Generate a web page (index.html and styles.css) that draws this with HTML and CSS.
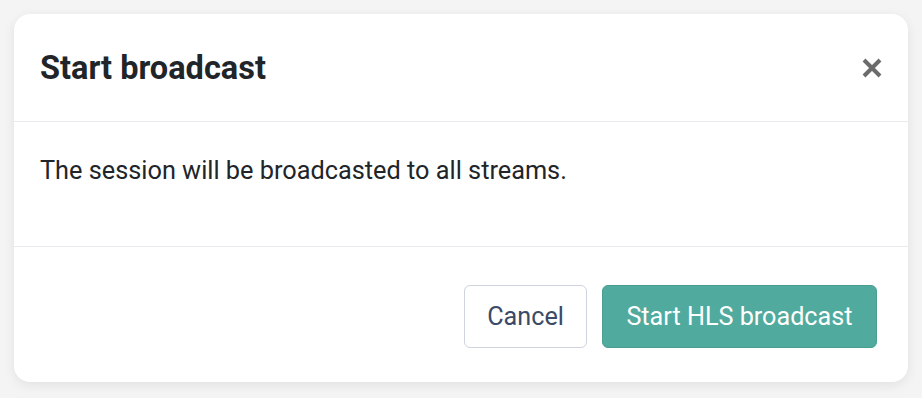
FILE: index.html
```html
<!DOCTYPE html>
<html lang="en">

<head>
        <meta charset="UTF-8">
        <meta name="viewport" content="width=device-width, initial-scale=1.0">
        <title>Start broadcast</title>
        <link rel="stylesheet" href="styles.css">
</head>

<body>
        <div class="modal">
                <div class="modal_header">
                        <h2 class="modal_title">Start broadcast</h2>
                        <button class="close_btn" aria-label="Close">
                                <svg width="22" height="22" viewBox="0 0 22 22">
                                        <path d="M3 3 L19 19 M19 3 L3 19" stroke="#6b6b6b" stroke-width="4" />
                                </svg>
                        </button>
                </div>
                <div class="modal_body">
                        <p>The session will be broadcasted to all streams.</p>
                </div>
                <div class="modal_footer">
                        <button class="btn btn_cancel">Cancel</button>
                        <button class="btn btn_start">Start HLS broadcast</button>
                </div>
        </div>
</body>

</html>
```

FILE: styles.css
```css
body {
        margin: 0;
        padding: 14px;
        background-color: #f4f4f4;
        font-family: Roboto, "Liberation Sans", sans-serif;
        color: #212529;
}

.modal {
        width: 894px;
        background-color: #fff;
        border-radius: 16px;
        box-shadow: 0 3px 12px rgba(0, 0, 0, 0.08);
}

.modal_header {
        height: 108px;
        display: flex;
        align-items: center;
        justify-content: space-between;
        padding: 0 25px 0 26px;
        border-bottom: 1px solid #e8ebee;
        box-sizing: border-box;
}

.modal_title {
        margin: 0;
        font-size: 32.5px;
        font-weight: 700;
        color: #212529;
}

.close_btn {
        background: none;
        border: none;
        padding: 0;
        width: 22px;
        height: 22px;
        cursor: pointer;
}

.modal_body {
        padding: 30px 26px 27px;
        border-bottom: 1px solid #e8ebee;
}

.modal_body p {
        margin: 0 0 30px;
        font-size: 25.3px;
        line-height: 37px;
}

.modal_footer {
        display: flex;
        justify-content: flex-end;
        gap: 15px;
        padding: 38px 31px 34px;
}

.btn {
        height: 63px;
        border-radius: 6px;
        font-family: Roboto, "Liberation Sans", sans-serif;
        font-size: 25.2px;
        cursor: pointer;
}

.btn_cancel {
        padding: 0 22px;
        background-color: #fff;
        color: #3b4a66;
        border: 1px solid #cdd4de;
}

.btn_start {
        padding: 0 23.5px;
        background-color: #50aa9d;
        color: #fff;
        border: 1px solid #4a9e91;
}
```
